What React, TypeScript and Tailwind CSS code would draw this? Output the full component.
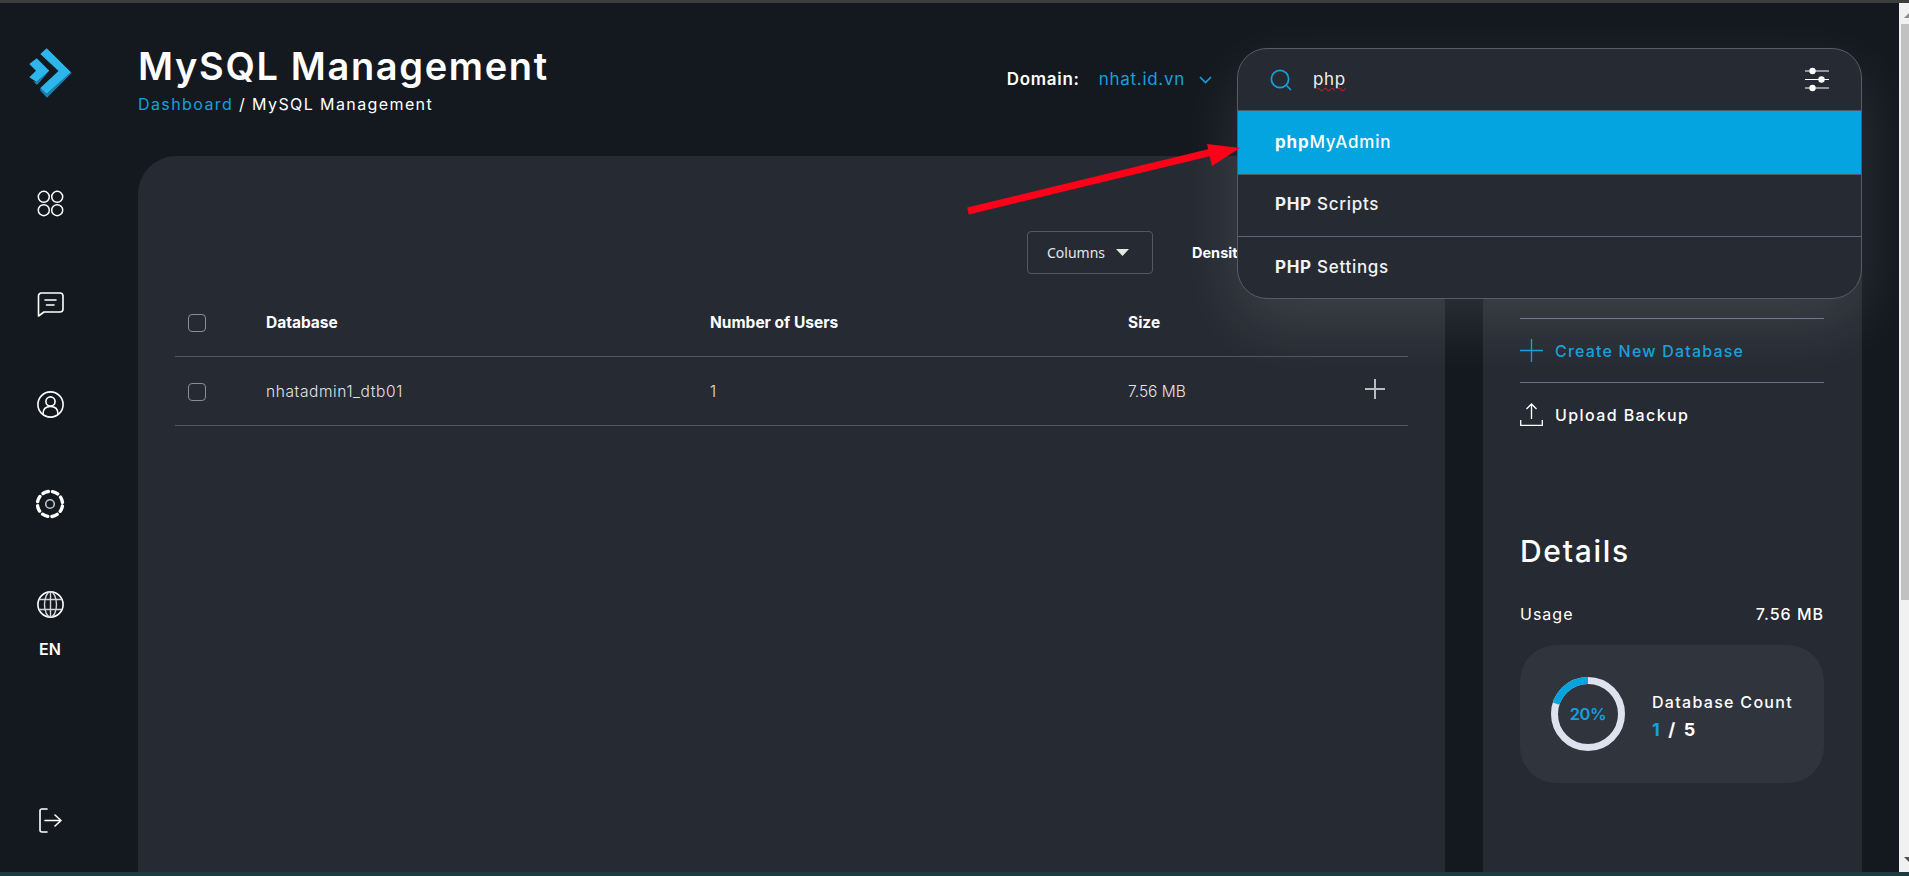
import React from "react";

const sans = "font-['Inter','Noto_Sans',sans-serif]";

function Logo() {
  return (
    <svg width="43" height="50" viewBox="8 8 43 50" fill="none">
      <path d="M19.3 14 L25.7 8.3 L50 32.3 L25.7 54 L19.3 48 L37.5 31 Z" fill="#2db6ec" />
      <path d="M50.7 33 L26 57.7 L19.3 50.5 L19.3 48 L25.7 54 L50 32.3 Z" fill="#1a83b4" />
      <path d="M8.3 24 L15.7 18.3 L28.3 30.7 L15.7 42 L8.3 37.3 L15 30.7 Z" fill="#2db6ec" />
      <path d="M28.3 31 L16 45 L12 41 L15.7 42 Z" fill="#1a83b4" />
    </svg>
  );
}

function IconApps() {
  return (
    <svg width="27" height="27" viewBox="0 0 27 27" fill="none" stroke="#fff" strokeWidth="1.5">
      <circle cx="6.8" cy="6.8" r="5.5" />
      <circle cx="20.2" cy="6.8" r="5.5" />
      <circle cx="6.8" cy="20.2" r="5.5" />
      <circle cx="20.2" cy="20.2" r="5.5" />
    </svg>
  );
}

function IconChat() {
  return (
    <svg width="27" height="25" viewBox="0 0 27 25" fill="none" stroke="#fff" strokeWidth="1.6" strokeLinejoin="round" strokeLinecap="round">
      <path d="M4 1 H23 A3 3 0 0 1 26 4 V17 A3 3 0 0 1 23 20 H7 L1.5 24 V4 A3 3 0 0 1 4 1 Z" />
      <path d="M8 8 H19 M9.5 13 H17" />
    </svg>
  );
}

function IconUser() {
  return (
    <svg width="27" height="27" viewBox="0 0 27 27" fill="none" stroke="#fff" strokeWidth="1.6">
      <circle cx="13.5" cy="13.5" r="12.6" />
      <circle cx="13.5" cy="10.5" r="4.6" />
      <path d="M6 23 C6 18 9 15.5 13.5 15.5 C18 15.5 21 18 21 23" />
    </svg>
  );
}

function IconGear() {
  return (
    <svg width="30" height="30" viewBox="0 0 30 30" fill="none">
      <circle cx="15" cy="15" r="12.6" stroke="#fff" strokeWidth="3.4" strokeLinecap="round" strokeDasharray="5.6 4.3" strokeDashoffset="-2.15" />
      <circle cx="15" cy="15" r="4.3" stroke="#c4c6c9" strokeWidth="1.6" />
    </svg>
  );
}

function IconGlobe() {
  return (
    <svg width="27" height="27" viewBox="0 0 27 27" fill="none" stroke="#d4d5d6" strokeWidth="1.4">
      <circle cx="13.5" cy="13.5" r="12.6" stroke="#fff" strokeWidth="1.6" />
      <ellipse cx="13.5" cy="13.5" rx="6" ry="12.6" />
      <path d="M13.5 1 V26 M2.5 8.5 H24.5 M2.5 18.5 H24.5" />
    </svg>
  );
}

function IconLogout() {
  return (
    <svg width="23" height="25" viewBox="0 0 23 25" fill="none" stroke="#fff" strokeWidth="1.6" strokeLinecap="round" strokeLinejoin="round">
      <path d="M8 1 H3 A2 2 0 0 0 1 3 V22 A2 2 0 0 0 3 24 H8" />
      <path d="M6 12.5 H22 M16 7 L22 12.5 L16 18" />
    </svg>
  );
}

function Check() {
  return <span className="block w-[18px] h-[18px] rounded-[4px] border border-[#8a8d93]" />;
}

function SidebarIcon({ children, className }: { children: React.ReactNode; className: string }) {
  return <div className={"flex justify-center " + className}>{children}</div>;
}

export default function App() {
  return (
    <div className={"relative flex flex-col w-full h-[876px] overflow-hidden bg-[#141920] text-white " + sans}>
      <div className="h-[3px] shrink-0 bg-[#3d3d3d]" />
      <div className="flex flex-1 min-h-0">
        <aside className="w-[138px] shrink-0 pr-[38px] flex flex-col items-stretch">
          <SidebarIcon className="pt-[45px]"><Logo /></SidebarIcon>
          <SidebarIcon className="pt-[92px]"><IconApps /></SidebarIcon>
          <SidebarIcon className="pt-[75px]"><IconChat /></SidebarIcon>
          <SidebarIcon className="pt-[74px]"><IconUser /></SidebarIcon>
          <SidebarIcon className="pt-[71px]"><IconGear /></SidebarIcon>
          <SidebarIcon className="pt-[72px]"><IconGlobe /></SidebarIcon>
          <div className="pt-[20px] text-center text-[16px] leading-[22px] font-semibold">EN</div>
          <SidebarIcon className="pt-[148px]"><IconLogout /></SidebarIcon>
        </aside>

        <div className="flex-1 min-w-0 flex flex-col">
          <header className="h-[153px] shrink-0 flex">
            <div className="pt-[40px]">
              <h1 className="text-[38px] leading-[46px] font-semibold tracking-[1.65px]">MySQL Management</h1>
              <div className="mt-[4px] text-[16px] leading-[22px] font-normal tracking-[1.4px]">
                <span className="text-[#14a0dc]">Dashboard</span> / MySQL Management
              </div>
            </div>
            <div className="ml-[458px] pt-[65px] flex items-start text-[17px] leading-[22px] tracking-[0.7px]">
              <span className="font-semibold w-[92px]">Domain:</span>
              <span className="text-[#14a0dc] w-[100px]">nhat.id.vn</span>
              <svg className="mt-[8px]" width="13" height="8" viewBox="0 0 13 8" fill="none" stroke="#14a0dc" strokeWidth="1.6"><path d="M1 1 L6.5 6.5 L12 1" /></svg>
            </div>
          </header>

          <div className="flex flex-1 min-h-0 pr-[37px] gap-[38px]">
            <main className="w-[1307px] shrink-0 bg-[#262a32] rounded-tl-[38px] pl-[37px] pr-[37px]">
              <div className="flex items-center pt-[75px] pl-[852px] h-[118px]">
                <button className="w-[126px] h-[43px] rounded-[4px] border border-[#545860] flex items-center pl-[19px] text-[14px] text-[#e6e7e9] font-['Noto_Sans',sans-serif]">
                  Columns
                  <svg className="ml-[11px]" width="13" height="7" viewBox="0 0 13 7"><path d="M0 0 H13 L6.5 7 Z" fill="#e6e7e9" /></svg>
                </button>
                <span className="ml-[39px] text-[14.5px] font-bold">Density</span>
              </div>
              <div className="grid grid-cols-[78px_444px_418px_1fr] items-center h-[83px] pt-[15px] pl-[13px] border-b border-[#53565d] text-[15.5px] font-bold">
                <Check />
                <span>Database</span>
                <span>Number of Users</span>
                <span>Size</span>
              </div>
              <div className="grid grid-cols-[78px_444px_418px_1fr_auto] items-center h-[69px] pt-[1px] pl-[13px] pr-[23px] border-b border-[#53565d] text-[15.5px] text-[#e2e3e5] font-light">
                <Check />
                <span className="tracking-[0.6px]">nhatadmin1_dtb01</span>
                <span>1</span>
                <span>7.56 MB</span>
                <svg className="mb-[5px]" width="20" height="20" viewBox="0 0 20 20" stroke="#b9bbbe" strokeWidth="2"><path d="M10 0 V20 M0 10 H20" /></svg>
              </div>
            </main>

            <section className="flex-1 min-w-0 bg-[#262a32] rounded-tr-[38px] pl-[37px] pr-[38px] pt-[162px]">
              <div className="border-t border-[#66728a] h-[64px] flex items-center gap-[12px]">
                <svg width="23" height="23" viewBox="0 0 23 23" stroke="#14a0dc" strokeWidth="1.3"><path d="M11.5 0 V23 M0 11.5 H23" /></svg>
                <span className="text-[#14a0dc] text-[16px] font-medium tracking-[1.2px]">Create New Database</span>
              </div>
              <div className="border-t border-[#66728a] h-[64px] flex items-center gap-[12px]">
                <svg width="23" height="23" viewBox="0 0 23 23" fill="none" stroke="#fff" strokeWidth="1.3"><path d="M11.5 16 V1 M6.5 6 L11.5 1 L16.5 6 M0.7 17 V22.3 H22.3 V17" /></svg>
                <span className="text-[16px] font-medium tracking-[1.4px]">Upload Backup</span>
              </div>
              <h2 className="mt-[87px] text-[30px] leading-[36px] font-medium tracking-[1.7px]">Details</h2>
              <div className="mt-[33px] flex justify-between text-[16px] leading-[24px]">
                <span className="tracking-[1px]">Usage</span>
                <span className="font-medium tracking-[1px]">7.56 MB</span>
              </div>
              <div className="mt-[19px] h-[138px] rounded-[36px] bg-[#30343d] flex items-center pl-[31px]">
                <div className="relative w-[74px] h-[74px] shrink-0 flex items-center justify-center">
                  <svg className="absolute inset-0" width="74" height="74" viewBox="0 0 74 74" fill="none" strokeWidth="7">
                    <circle cx="37" cy="37" r="33.5" stroke="#dde3ee" />
                    <path d="M37 3.5 A33.5 33.5 0 0 0 5.1 26.6" stroke="#03a4df" />
                  </svg>
                  <span className="text-[16.5px] font-semibold text-[#14a0dc] tracking-[-0.4px]">20%</span>
                </div>
                <div className="ml-[27px] pt-[3px]">
                  <div className="text-[16px] leading-[22px] font-medium tracking-[1.3px]">Database Count</div>
                  <div className="mt-[6px] text-[18px] leading-[22px] font-bold whitespace-pre"><span className="text-[#14a0dc]">1</span>{"  /  5"}</div>
                </div>
              </div>
            </section>
          </div>
        </div>

        <div className="relative w-[10px] shrink-0 bg-[#f1f1f1]">
          <svg className="absolute right-0 top-[10px]" width="5" height="5" viewBox="0 0 5 5"><path d="M5 0 V5 H0 Z" fill="#8a8a8a" /></svg>
          <div className="absolute right-0 top-[21px] w-[8px] h-[576px] bg-[#c1c1c1]" />
          <svg className="absolute right-0 bottom-[10px]" width="5" height="5" viewBox="0 0 5 5"><path d="M0 0 H5 V5 Z" fill="#505050" /></svg>
        </div>
      </div>
      <div className="h-[4px] shrink-0 bg-[#1f3a40]" />

      {/* search popup */}
      <div className="absolute left-[1237px] top-[48px] w-[625px] h-[251px] rounded-[30px] border border-[#585c68] bg-[#262a32] overflow-hidden shadow-[0_24px_64px_0_rgba(255,255,255,0.11)]">
        <div className="h-[61px] flex items-center pl-[32px] pr-[32px]">
          <svg width="22" height="22" viewBox="0 0 22 22" fill="none" stroke="#14a0dc" strokeWidth="1.7" strokeLinecap="round"><circle cx="10" cy="10" r="8.6" /><path d="M16.5 16.5 L20.5 20.5" /></svg>
          <span className="ml-[21px] text-[17px] text-[#f0f0f0] tracking-[0.6px] underline decoration-wavy decoration-[#e01b24] decoration-1 underline-offset-2">php</span>
          <svg className="ml-auto" width="24" height="25" viewBox="0 0 24 25" stroke="#fff" strokeWidth="1.2" fill="#fff"><path d="M0 4 H24 M0 12.5 H24 M0 21 H24" /><circle cx="7.5" cy="4" r="3.2" stroke="none" /><circle cx="16.5" cy="12.5" r="3.2" stroke="none" /><circle cx="7.5" cy="21" r="3.2" stroke="none" /></svg>
        </div>
        <div className="h-[65px] border-y border-[#50596a] bg-[#03a4df] flex items-center pl-[37px] text-[17px] font-medium tracking-[0.8px]"><b className="font-bold">php</b>MyAdmin</div>
        <div className="h-[62px] pb-[1px] border-b border-[#5e6377] flex items-center pl-[37px] text-[17px] font-medium tracking-[0.7px] text-[#f2f2f2]"><b className="font-bold">PHP</b>&nbsp;Scripts</div>
        <div className="h-[61px] flex items-center pl-[37px] text-[17px] font-medium tracking-[0.7px] text-[#f2f2f2]"><b className="font-bold">PHP</b>&nbsp;Settings</div>
      </div>

      {/* red annotation arrow */}
      <svg className="absolute left-[960px] top-[135px] pointer-events-none" width="290" height="85" viewBox="960 135 290 85" fill="none">
        <path d="M968 211 L1212 152" stroke="#ff0019" strokeWidth="7" />
        <path d="M1207 144 L1240 148 L1212 166 Z" fill="#ff0019" />
      </svg>
    </div>
  );
}
